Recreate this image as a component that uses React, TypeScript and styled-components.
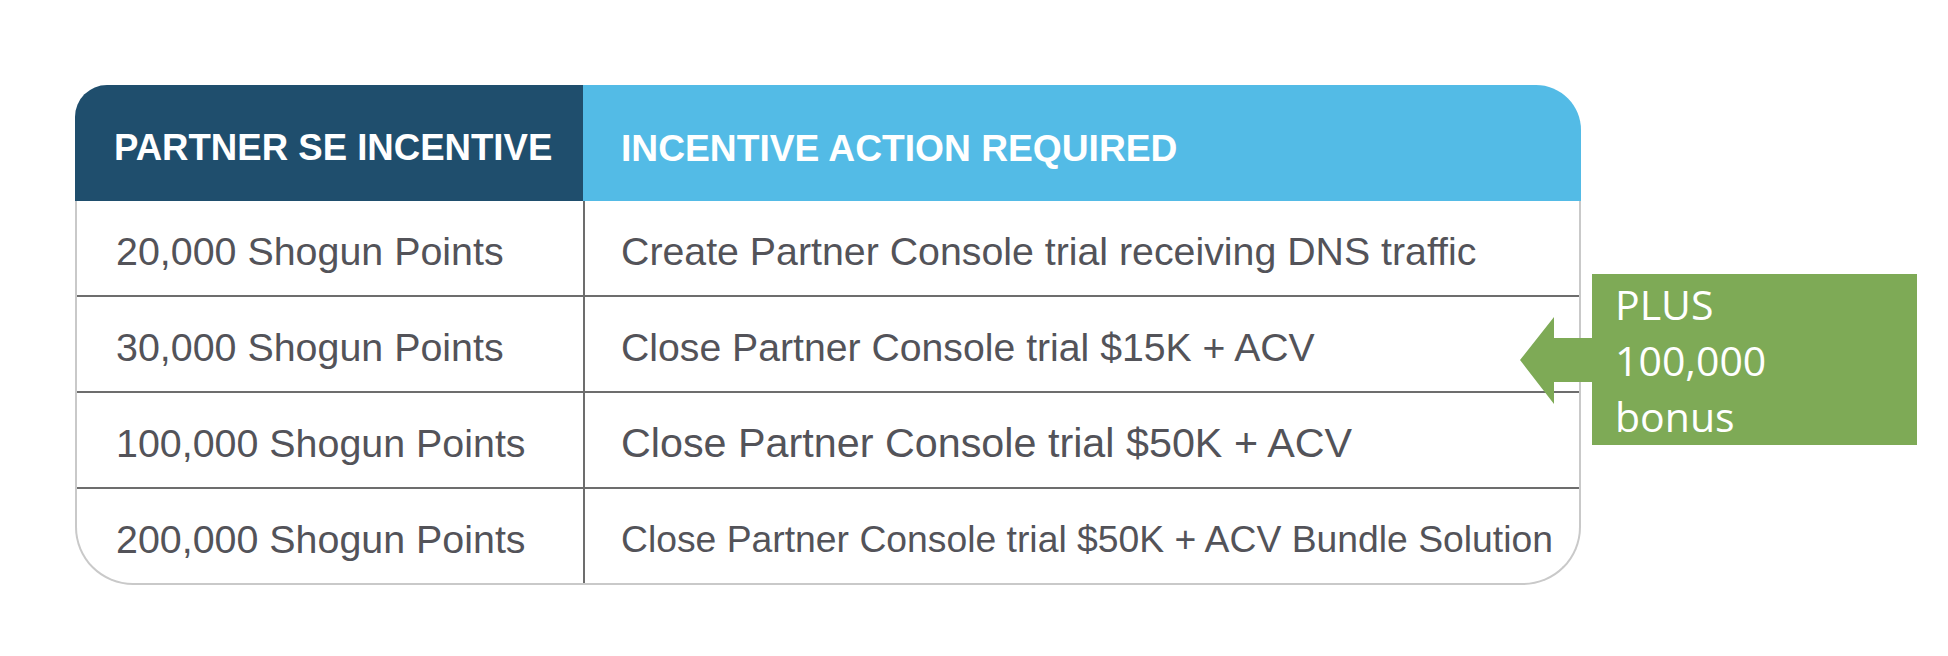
import React from "react";
import styled, { createGlobalStyle } from "styled-components";

const GlobalStyle = createGlobalStyle`
  html, body { margin: 0; padding: 0; background: #ffffff; }
  body { font-family: "Liberation Sans", Arial, sans-serif; }
  * { box-sizing: border-box; }
`;

const Page = styled.div`
  width: 1948px;
  height: 656px;
  padding: 85px 0 0 75px;
  display: flex;
  align-items: flex-start;
  background: #ffffff;
`;

const Table = styled.div`
  width: 1506px;
  display: flex;
  flex-direction: column;
  flex: none;
`;

const HeaderRow = styled.div`
  display: grid;
  grid-template-columns: 508px 1fr;
  height: 116px;
`;

const HeaderCell = styled.div<{ $tone: "dark" | "light" }>`
  display: flex;
  align-items: center;
  padding: 10px 0 0 ${(p) => (p.$tone === "dark" ? "39px" : "38px")};
  background: ${(p) => (p.$tone === "dark" ? "#1f4e6d" : "#53bbe6")};
  border-radius: ${(p) => (p.$tone === "dark" ? "32px 0 0 0" : "0 45px 0 0")};
  color: #ffffff;
  font-family: "Liberation Sans", Arial, sans-serif;
  font-weight: 700;
  font-size: ${(p) => (p.$tone === "dark" ? "36.6px" : "37.2px")};
  white-space: nowrap;
`;

const Body = styled.div`
  border: 2px solid #c9c9c9;
  border-top: none;
  border-radius: 0 0 58px 58px;
  display: flex;
  flex-direction: column;
`;

const Row = styled.div<{ $last?: boolean }>`
  display: grid;
  grid-template-columns: 506px 1fr;
  height: ${(p) => (p.$last ? "94px" : "96px")};
  border-bottom: ${(p) => (p.$last ? "none" : "2px solid #6d6d6d")};
`;

const Cell = styled.div<{ $divider?: boolean; $size: number }>`
  display: flex;
  align-items: center;
  padding: 7px 0 0 ${(p) => (p.$divider ? "36px" : "39px")};
  border-left: ${(p) => (p.$divider ? "2px solid #6d6d6d" : "none")};
  color: #535359;
  font-family: "Liberation Sans", Arial, sans-serif;
  font-size: ${(p) => p.$size}px;
  white-space: nowrap;
`;

const Callout = styled.div`
  position: relative;
  margin: 189px 0 0 11px;
  width: 325px;
  height: 171px;
  padding: 2px 0 0 23px;
  background: #7eaa56;
  color: #ffffff;
  font-family: "Open Sans", "Noto Sans", sans-serif;
  font-size: 41px;
  line-height: 56px;
  flex: none;
`;

const Arrow = styled.svg`
  position: absolute;
  left: -72px;
  top: 43px;
  width: 73px;
  height: 87px;
  display: block;
`;

const rows: { points: string; action: string; size: number }[] = [
  { points: "20,000 Shogun Points", action: "Create Partner Console trial receiving DNS traffic", size: 39.3 },
  { points: "30,000 Shogun Points", action: "Close Partner Console trial $15K + ACV", size: 39.2 },
  { points: "100,000 Shogun Points", action: "Close Partner Console trial $50K + ACV", size: 41.3 },
  { points: "200,000 Shogun Points", action: "Close Partner Console trial $50K + ACV Bundle Solution", size: 37.3 },
];

export default function App() {
  return (
    <>
      <GlobalStyle />
      <Page>
        <Table>
          <HeaderRow>
            <HeaderCell $tone="dark">PARTNER SE INCENTIVE</HeaderCell>
            <HeaderCell $tone="light">INCENTIVE ACTION REQUIRED</HeaderCell>
          </HeaderRow>
          <Body>
            {rows.map((r, i) => (
              <Row key={r.points} $last={i === rows.length - 1}>
                <Cell $size={39.4}>{r.points}</Cell>
                <Cell $divider $size={r.size}>
                  {r.action}
                </Cell>
              </Row>
            ))}
          </Body>
        </Table>
        <Callout>
          <Arrow viewBox="0 0 73 87">
            <polygon
              points="0,43 34,0 34,21 73,21 73,65 34,65 34,87"
              fill="#7eaa56"
            />
          </Arrow>
          <div>PLUS</div>
          <div>100,000</div>
          <div>bonus</div>
        </Callout>
      </Page>
    </>
  );
}
